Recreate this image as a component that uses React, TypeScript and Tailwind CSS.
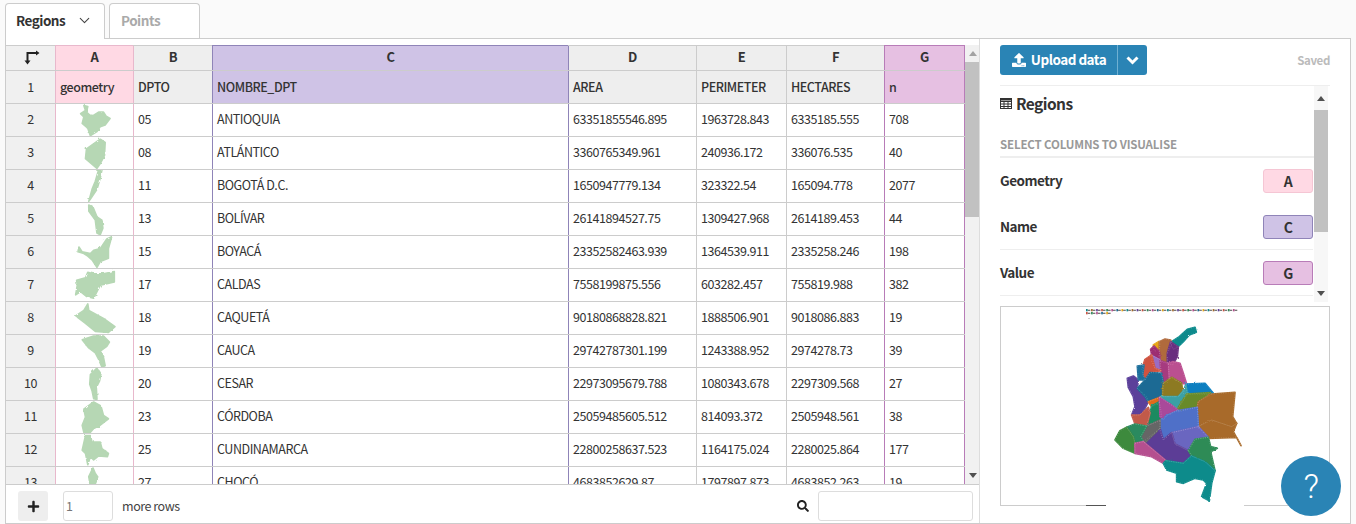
import type { ReactNode } from "react";
import { ChevronDown } from "lucide-react";
import { FaPlus, FaSearch, FaUpload } from "react-icons/fa";

const font = "font-['Noto_Sans_CJK_JP','Noto_Sans',sans-serif]";

const shapes: Record<number, string> = {
  2: "250,5 262,8 258,25 268,34 278,36 295,25 310,25 318,38 330,45 315,65 300,70 290,85 270,98 262,75 245,60 250,40 240,30 255,20",
  3: "300,7 315,17 313,57 300,82 290,97 255,67 258,37",
  4: "295,0 305,0 300,25 290,60 270,90 265,97 275,60 285,35",
  5: "265,6 278,13 290,43 305,53 308,78 300,98 290,93 285,53 265,25",
  6: "335,2 325,39 325,69 300,79 290,97 275,74 262,62 250,54 232,49 235,34 245,49 270,54 280,44 300,39 320,9",
  7: "343,8 343,40 300,50 280,90 258,85 240,70 225,80 230,50 228,35 255,27 262,10 280,15 310,15",
  8: "262,6 265,26 310,51 345,76 325,94 285,91 255,66 225,43 250,26",
  9: "245,15 280,3 310,3 328,22 320,35 300,50 310,70 315,95 305,99 295,75 285,55 265,40",
  10: "290,0 302,18 298,40 288,60 290,97 280,95 275,70 268,50 270,20",
  11: "280,3 302,15 310,45 325,55 300,75 280,85 270,97 250,97 245,75 255,50 250,25",
  12: "255,5 270,5 275,25 300,25 305,45 325,60 322,70 295,68 280,80 270,70 262,95 255,60 245,50",
  13: "278,3 285,20 295,35 285,50 290,70 280,95 270,60 265,30",
};

const rows = [
  ["05", "ANTIOQUIA", "63351855546.895", "1963728.843", "6335185.555", "708"],
  ["08", "ATLÁNTICO", "3360765349.961", "240936.172", "336076.535", "40"],
  ["11", "BOGOTÁ D.C.", "1650947779.134", "323322.54", "165094.778", "2077"],
  ["13", "BOLÍVAR", "26141894527.75", "1309427.968", "2614189.453", "44"],
  ["15", "BOYACÁ", "23352582463.939", "1364539.911", "2335258.246", "198"],
  ["17", "CALDAS", "7558199875.556", "603282.457", "755819.988", "382"],
  ["18", "CAQUETÁ", "90180868828.821", "1888506.901", "9018086.883", "19"],
  ["19", "CAUCA", "29742787301.199", "1243388.952", "2974278.73", "39"],
  ["20", "CESAR", "22973095679.788", "1080343.678", "2297309.568", "27"],
  ["23", "CÓRDOBA", "25059485605.512", "814093.372", "2505948.561", "38"],
  ["25", "CUNDINAMARCA", "22800258637.523", "1164175.024", "2280025.864", "177"],
  ["27", "CHOCÓ", "4683852629.87", "1797897.873", "4683852.263", "19"],
];

const regions: [string, string][] = [
  ["#0b8a8c", "270,128 298,110 322,88 345,82 349,97 328,105 310,125 292,142 280,148"],
  ["#e8a514", "220,135 237,124 240,130 238,155 222,152"],
  ["#b06a3c", "238,125 255,117 272,120 275,135 262,160 262,190 242,185 238,155"],
  ["#6b2f7f", "272,125 290,138 295,140 292,170 278,195 262,190 262,160"],
  ["#9c2d72", "212,148 222,138 238,155 240,178 215,165"],
  ["#9a6cc2", "212,165 240,180 243,212 225,205 215,185"],
  ["#a63a7f", "240,182 265,190 268,238 250,250 245,222 243,212"],
  ["#bb4f90", "278,185 300,190 310,220 320,252 305,250 275,232 268,238 265,190"],
  ["#cf5340", "195,178 215,165 225,205 243,212 210,218 195,240 185,210"],
  ["#5b3f9a", "142,235 160,228 175,240 172,265 200,290 205,305 195,325 180,345 155,345 165,320 160,290 145,262"],
  ["#1e6f9c", "172,198 192,195 188,225 195,240 175,240"],
  ["#1b6b94", "172,265 195,240 210,218 245,220 250,250 248,290 205,305 195,290"],
  ["#8d7a22", "248,265 250,250 275,232 305,250 308,275 295,290 248,290"],
  ["#0d7fc0", "318,252 375,250 402,282 320,282 310,280"],
  ["#3aa0a5", "240,290 295,290 308,275 318,255 322,282 295,325 270,312"],
  ["#678a2a", "320,282 392,278 355,305 350,322 295,335 293,325"],
  ["#a86a2a", "352,322 355,305 395,282 465,277 458,350 470,370 455,380 395,360 370,370 355,380"],
  ["#a86a2a", "355,380 395,360 455,380 470,370 460,395 483,437 470,412 385,415"],
  ["#e06a1a", "205,305 240,292 238,308 215,320"],
  ["#1f8a60", "215,318 238,305 245,345 240,362 200,378 210,340"],
  ["#c25a4a", "155,345 180,345 205,322 210,340 200,378 165,372"],
  ["#a9489a", "238,292 270,312 293,330 262,345 250,360 240,350"],
  ["#4f70c8", "240,362 262,345 293,332 352,322 355,380 275,398 250,420 240,395"],
  ["#6b66c0", "275,398 355,380 385,412 345,418 325,452 285,432"],
  ["#5b3d96", "190,425 240,385 250,420 275,398 285,432 325,452 335,465 310,490 258,482"],
  ["#666666", "182,410 200,378 240,360 240,385 195,428"],
  ["#2a8a5e", "140,382 165,372 200,378 182,410 190,425 165,430 160,410"],
  ["#3d8a3d", "105,420 120,392 140,382 160,410 165,430 165,460 130,445"],
  ["#b5508f", "165,430 190,425 258,482 250,490 215,470 165,460"],
  ["#2e8b57", "325,452 345,418 385,412 392,440 412,445 392,455 405,512 375,485 335,468"],
  ["#0d8b8b", "250,490 258,482 310,490 335,468 375,485 405,512 395,550 388,602 365,590 380,550 370,540 345,535 310,550 290,545 290,520 260,510"],
];

const legendColors = ["#0b8a8c", "#a86a2a", "#5b3f9a", "#cf5340", "#2e8b57", "#bb4f90", "#1b6b94", "#e8a514"];

function CornerIcon() {
  return (
    <svg className="block" width="16" height="15" viewBox="0 0 16 15" fill="none" stroke="#222" strokeWidth="2">
      <path d="M3.500 12V3H13" />
      <path d="M0.500 10.500H6.500L3.500 14.500Z M12 0.500V5.500L15.500 3Z" fill="#222" stroke="none" />
    </svg>
  );
}

function TableIcon() {
  return (
    <svg width="12" height="11" viewBox="0 0 12 11" fill="none" stroke="#333" strokeWidth="1">
      <rect x="0.500" y="0.500" width="11" height="10" />
      <path d="M0.500 3.500H11.500M0.500 6H11.500M0.500 8.500H11.500M4 3.500V10.500M8 3.500V10.500" />
      <path d="M0.500 1.500H11.500" strokeWidth="2" />
    </svg>
  );
}

function Rough({ id, freq, scale }: { id: string; freq: number; scale: number }) {
  return (
    <filter id={id} x="-10%" y="-10%" width="120%" height="120%">
      <feTurbulence type="fractalNoise" baseFrequency={freq} numOctaves={2} seed={4} />
      <feDisplacementMap in="SourceGraphic" scale={scale} />
    </filter>
  );
}

function Thumb({ n }: { n: number }) {
  const id = `rough-${n}`;
  return (
    <svg className="block h-[32px] w-[77px]" viewBox="165 0 235 99" preserveAspectRatio="none">
      <defs>
        <Rough id={id} freq={0.07} scale={8} />
      </defs>
      <polygon points={shapes[n]} fill="#b6d7b4" stroke="#b6d7b4" strokeWidth="5" strokeLinejoin="round" filter={`url(#${id})`} />
    </svg>
  );
}

function MapPicture() {
  const ticks = Array.from({ length: 30 }, (_, i) => i);
  return (
    <svg className="block h-[198px] w-[328px]" viewBox="-237 21 984 594">
      <defs>
        <Rough id="rough-map" freq={0.1} scale={6} />
      </defs>
      {ticks.map((i) => (
        <g key={i}>
          <rect x={18 + i * 15.200} y={27} width={5} height={7} fill={legendColors[i % 8]} />
          <rect x={23 + i * 15.200} y={29} width={8} height={4} fill="#777777" />
        </g>
      ))}
      {ticks.slice(0, 5).map((i) => (
        <g key={i}>
          <rect x={18 + i * 15.200} y={36} width={5} height={7} fill={legendColors[(i + 3) % 8]} />
          <rect x={23 + i * 15.200} y={38} width={8} height={4} fill="#777777" />
        </g>
      ))}
      <rect x={24} y={54} width={6} height={3} fill="#cccccc" />
      <g filter="url(#rough-map)">
        {regions.map(([c, p], i) => (
          <polygon key={i} points={p} fill={c} stroke={c} strokeWidth="5" strokeLinejoin="round" />
        ))}
        {regions.map(([, p], i) => (
          <polygon key={i} points={p} fill="none" stroke="#ffffff" strokeWidth="1" strokeDasharray="3 4" strokeOpacity="0.500" />
        ))}
      </g>
    </svg>
  );
}

function Chip({ letter, cls }: { letter: string; cls: string }) {
  return (
    <div className={`flex h-[24px] w-[50px] items-center justify-center rounded-[3px] border text-[14px] font-semibold text-[#333] ${cls}`}>
      {letter}
    </div>
  );
}

function Setting({ label, children, ruled }: { label: string; children: ReactNode; ruled: boolean }) {
  return (
    <div className={ruled ? "flex h-[46px] items-center justify-between border-b border-[#eeeeee]" : "flex h-[46px] items-center justify-between"}>
      <span className="text-[13.500px] font-semibold tracking-[-0.5px] text-[#333]">{label}</span>
      {children}
    </div>
  );
}

export default function App() {
  return (
    <div className={`relative h-[524px] w-[1356px] overflow-hidden bg-[#fafafa] ${font} text-[12.500px] leading-none tracking-[-0.45px] text-[#333]`}>
      <div className="flex h-[38px] items-end gap-[4px] pl-[5px] pt-[3px]">
        <div className="z-10 -mb-px flex h-[36px] w-[100px] items-center justify-between rounded-t-[4px] border border-b-0 border-[#cccccc] bg-white pb-[2px] pl-[10px] pr-[11px] text-[13.500px] font-semibold tracking-[-0.5px] text-[#333]">
          Regions
          <ChevronDown size={17} strokeWidth={1.500} className="text-[#444]" />
        </div>
        <div className="flex h-[35px] w-[91px] items-center rounded-t-[4px] border border-b-0 border-[#cccccc] bg-white pl-[11px] text-[13.500px] font-semibold tracking-[-0.5px] text-[#aaaaaa]">
          Points
        </div>
      </div>

      <div className="ml-[5px] mr-[5px] flex h-[486px] border border-[#cccccc] bg-white">
        <div className="flex w-[974px] shrink-0 flex-col border-r border-[#dddddd] pt-[6px]">
          <div className="flex h-[440px] shrink-0 overflow-hidden border-b border-[#cccccc]">
            <div className="w-[959px] shrink-0">
              <div className="flex h-[26px] border-y border-[#cccccc] text-center text-[13px] font-semibold leading-[21px]">
                <div className="w-[49px] shrink-0 bg-[#f0f0f0] pl-[18px] pt-[4px]"><CornerIcon /></div>
                <div className="-mt-px w-[78px] shrink-0 border-l border-t border-[#e8b8cc] bg-[#ffd9e4]">A</div>
                <div className="w-[79px] shrink-0 border-l border-[#e8b8cc] bg-[#eeeeee]">B</div>
                <div className="-mt-px w-[356px] shrink-0 border-l border-t border-[#8f84b8] bg-[#cfc3e6]">C</div>
                <div className="w-[128px] shrink-0 border-l border-[#8f84b8] bg-[#eeeeee]">D</div>
                <div className="w-[90px] shrink-0 border-l border-[#cccccc] bg-[#eeeeee]">E</div>
                <div className="w-[98px] shrink-0 border-l border-[#cccccc] bg-[#eeeeee]">F</div>
                <div className="-mt-px w-[81px] shrink-0 border-x border-t border-[#b87cb8] bg-[#e6c0e2]">G</div>
              </div>
              <div className="flex h-[33px] border-b border-[#cccccc] font-medium leading-[31px]">
                <div className="w-[49px] shrink-0 bg-[#f0f0f0] text-center font-normal">1</div>
                <div className="w-[78px] shrink-0 border-l border-[#e8b8cc] bg-[#ffd9e4] pl-[4px]">geometry</div>
                <div className="w-[79px] shrink-0 border-l border-[#e8b8cc] bg-[#eeeeee] pl-[4px]">DPTO</div>
                <div className="w-[356px] shrink-0 border-l border-[#8f84b8] bg-[#cfc3e6] pl-[4px]">NOMBRE_DPT</div>
                <div className="w-[128px] shrink-0 border-l border-[#8f84b8] bg-[#eeeeee] pl-[4px]">AREA</div>
                <div className="w-[90px] shrink-0 border-l border-[#cccccc] bg-[#eeeeee] pl-[4px]">PERIMETER</div>
                <div className="w-[98px] shrink-0 border-l border-[#cccccc] bg-[#eeeeee] pl-[4px]">HECTARES</div>
                <div className="w-[81px] shrink-0 border-x border-[#b87cb8] bg-[#e6c0e2] pl-[4px]">n</div>
              </div>
              {rows.map((r, i) => (
                <div key={i} className="flex h-[33px] border-b border-[#cccccc] leading-[30px]">
                  <div className="w-[49px] shrink-0 bg-[#f0f0f0] text-center">{i + 2}</div>
                  <div className="w-[78px] shrink-0 border-l border-[#e8b8cc]"><Thumb n={i + 2} /></div>
                  <div className="w-[79px] shrink-0 border-l border-[#e8b8cc] pl-[4px]">{r[0]}</div>
                  <div className="w-[356px] shrink-0 border-l border-[#8f84b8] pl-[4px]">{r[1]}</div>
                  <div className="w-[128px] shrink-0 border-l border-[#8f84b8] pl-[4px]">{r[2]}</div>
                  <div className="w-[90px] shrink-0 border-l border-[#cccccc] pl-[4px]">{r[3]}</div>
                  <div className="w-[98px] shrink-0 border-l border-[#cccccc] pl-[4px]">{r[4]}</div>
                  <div className="w-[81px] shrink-0 border-x border-[#b87cb8] pl-[4px]">{r[5]}</div>
                </div>
              ))}
            </div>
            <div className="flex w-[15px] shrink-0 flex-col bg-[#f1f1f1]">
              <div className="flex h-[17px] items-center justify-center"><svg width="8" height="5"><path d="M4 0L8 5H0Z" fill="#a3a3a3" /></svg></div>
              <div className="h-[155px] bg-[#c1c1c1]" />
              <div className="flex-1" />
              <div className="flex h-[17px] items-center justify-center"><svg width="8" height="5"><path d="M0 0H8L4 5Z" fill="#505050" /></svg></div>
            </div>
          </div>
          <div className="flex flex-1 items-start pl-[12px] pr-[6px] pt-[6px]">
            <div className="flex h-[30px] w-[30px] items-center justify-center rounded-[3px] bg-[#eeeeee] text-[#222]"><FaPlus size={13} /></div>
            <div className="ml-[15px] flex h-[30px] w-[50px] items-center rounded-[3px] border border-[#dddddd] bg-white pl-[2px] text-[#777]">1</div>
            <div className="ml-[9px] flex h-[30px] items-center text-[#444]">more rows</div>
            <div className="ml-auto mr-[9px] flex h-[30px] items-center text-[#222]"><FaSearch size={12} /></div>
            <div className="h-[30px] w-[155px] rounded-[3px] border border-[#dddddd] bg-white" />
          </div>
        </div>

        <div className="flex-1 pl-[20px] pr-[20px] pt-[6px]">
          <div className="flex h-[30px] items-center justify-between">
            <div className="flex h-[30px] rounded-[3px] bg-[#2a84b5] text-[13.500px] font-semibold tracking-[-0.5px] text-white">
              <div className="flex w-[118px] items-center justify-center gap-[5px] border-r border-[#6fb0d2] pb-px pl-[1px]"><FaUpload size={14} />Upload data</div>
              <div className="flex w-[29px] items-center justify-center">
                <svg width="13" height="9" viewBox="0 0 13 9" fill="none" stroke="#ffffff" strokeWidth="3"><path d="M1.500 1.500L6.500 6.500L11.500 1.500" /></svg>
              </div>
            </div>
            <span className="pt-[1px] text-[11.500px] font-semibold tracking-[-0.35px] text-[#bbbbbb]">Saved</span>
          </div>
          <div className="mt-[10px] flex h-[217px] border-t border-[#eeeeee]">
            <div className="w-[314px] shrink-0">
              <div className="flex h-[35px] items-center gap-[4px] text-[15.500px] font-semibold tracking-[-0.55px] text-[#333]"><TableIcon />Regions</div>
              <div className="mt-[18px] h-[19px] border-b-2 border-[#eeeeee] text-[11.500px] font-semibold tracking-[-0.15px] text-[#999999]">SELECT COLUMNS TO VISUALISE</div>
              <div className="pr-px">
                <Setting label="Geometry" ruled={false}><Chip letter="A" cls="border-[#f5c6d4] bg-[#ffd9e4]" /></Setting>
                <Setting label="Name" ruled><Chip letter="C" cls="border-[#8f84b8] bg-[#cfc3e6]" /></Setting>
                <Setting label="Value" ruled><Chip letter="G" cls="border-[#b87cb8] bg-[#e6c0e2]" /></Setting>
              </div>
            </div>
            <div className="flex w-[14px] shrink-0 flex-col bg-[#f7f7f7]">
              <div className="flex h-[24px] items-center justify-center"><svg width="8" height="5"><path d="M4 0L8 5H0Z" fill="#505050" /></svg></div>
              <div className="h-[122px] bg-[#c1c1c1]" />
              <div className="flex-1" />
              <div className="flex h-[17px] items-center justify-center"><svg width="8" height="5"><path d="M0 0H8L4 5Z" fill="#505050" /></svg></div>
            </div>
          </div>
          <div className="relative mt-[4px] h-[200px] w-[330px] border border-[#cccccc] bg-white">
            <MapPicture />
            <div className="absolute bottom-[-4px] left-[85px] h-[5px] w-[158px] bg-white">
              <div className="mt-[1px] h-[1px] w-[20px] bg-[#555]" />
            </div>
          </div>
        </div>
      </div>

      <div className="absolute left-[1281px] top-[456px] flex h-[60px] w-[60px] items-center justify-center rounded-full bg-[#2a84b5] font-['Roboto',sans-serif] text-[34px] font-light text-white">?</div>
    </div>
  );
}
